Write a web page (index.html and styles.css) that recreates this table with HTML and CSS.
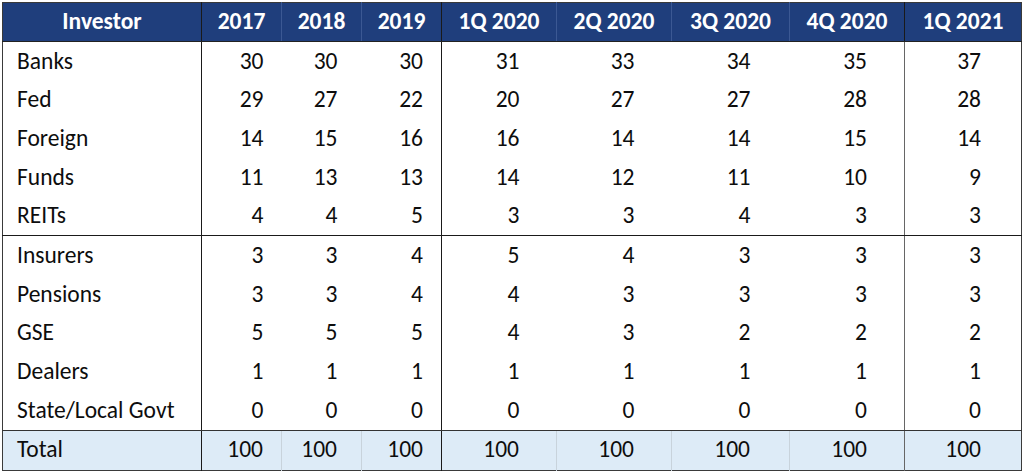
FILE: index.html
```html
<!DOCTYPE html>
<html>
<head>
<meta charset="utf-8">
<link rel="stylesheet" href="styles.css">
</head>
<body>
<table class="grid">
  <colgroup>
    <col class="c-name"><col class="c-yr"><col class="c-yr"><col class="c-yr">
    <col class="c-q"><col class="c-q"><col class="c-q3"><col class="c-q"><col class="c-q5">
  </colgroup>
  <thead>
    <tr>
      <th class="sep">Investor</th><th>2017</th><th>2018</th><th class="sep">2019</th>
      <th>1Q 2020</th><th>2Q 2020</th><th>3Q 2020</th><th class="sep">4Q 2020</th><th>1Q 2021</th>
    </tr>
  </thead>
  <tbody>
    <tr><td class="sep">Banks</td><td>30</td><td>30</td><td class="sep">30</td><td class="q">31</td><td class="q">33</td><td class="q">34</td><td class="q sep2">35</td><td class="q">37</td></tr>
    <tr><td class="sep">Fed</td><td>29</td><td>27</td><td class="sep">22</td><td class="q">20</td><td class="q">27</td><td class="q">27</td><td class="q sep2">28</td><td class="q">28</td></tr>
    <tr><td class="sep">Foreign</td><td>14</td><td>15</td><td class="sep">16</td><td class="q">16</td><td class="q">14</td><td class="q">14</td><td class="q sep2">15</td><td class="q">14</td></tr>
    <tr><td class="sep">Funds</td><td>11</td><td>13</td><td class="sep">13</td><td class="q">14</td><td class="q">12</td><td class="q">11</td><td class="q sep2">10</td><td class="q">9</td></tr>
    <tr class="grp"><td class="sep">REITs</td><td>4</td><td>4</td><td class="sep">5</td><td class="q">3</td><td class="q">3</td><td class="q">4</td><td class="q sep2">3</td><td class="q">3</td></tr>
    <tr><td class="sep">Insurers</td><td>3</td><td>3</td><td class="sep">4</td><td class="q">5</td><td class="q">4</td><td class="q">3</td><td class="q sep2">3</td><td class="q">3</td></tr>
    <tr><td class="sep">Pensions</td><td>3</td><td>3</td><td class="sep">4</td><td class="q">4</td><td class="q">3</td><td class="q">3</td><td class="q sep2">3</td><td class="q">3</td></tr>
    <tr><td class="sep">GSE</td><td>5</td><td>5</td><td class="sep">5</td><td class="q">4</td><td class="q">3</td><td class="q">2</td><td class="q sep2">2</td><td class="q">2</td></tr>
    <tr><td class="sep">Dealers</td><td>1</td><td>1</td><td class="sep">1</td><td class="q">1</td><td class="q">1</td><td class="q">1</td><td class="q sep2">1</td><td class="q">1</td></tr>
    <tr class="grp2"><td class="sep">State/Local Govt</td><td>0</td><td>0</td><td class="sep">0</td><td class="q">0</td><td class="q">0</td><td class="q">0</td><td class="q sep2">0</td><td class="q">0</td></tr>
    <tr class="total"><td class="sep">Total</td><td>100</td><td>100</td><td class="sep">100</td><td class="q">100</td><td class="q">100</td><td class="q">100</td><td class="q sep2">100</td><td class="q">100</td></tr>
  </tbody>
</table>
</body>
</html>
```
FILE: styles.css
```css
html, body {
  margin: 0;
  padding: 0;
  background: #ffffff;
}
body {
  padding: 2px 0 0 2px;
  font-family: Carlito, Calibri, Lato, "Liberation Sans", sans-serif;
  font-size: 23.5px;
  color: #0d0d0d;
}
.grid {
  border-collapse: collapse;
  table-layout: fixed;
  width: 1018px;
  border: 1.5px solid #3a3a3a;
}
.c-name { width: 199px; }
.c-yr { width: 80px; }
.c-q { width: 115px; }
.c-q3 { width: 118px; }
.c-q5 { width: 117px; }

thead th {
  background: #1f3e7c;
  color: #ffffff;
  font-weight: 700;
  height: 38px;
  padding: 0;
  text-align: center;
  line-height: 1;
  border-left: 1px solid #3b5893;
  border-bottom: 1.5px solid #222;
}
thead th:first-child { border-left: none; }
thead th.sep { border-right: 1.5px solid #1a1a1a; }

tbody td {
  height: 38.7px;
  padding: 0 18px 0 0;
  text-align: right;
  line-height: 1;
}
tbody td:first-child {
  text-align: left;
  padding: 0 0 0 14px;
}
tbody td.q { padding-right: 37px; }
tbody td:nth-child(7) { padding-right: 39px; }
tbody td:nth-child(9) { padding-right: 40px; }
tbody td.sep { border-right: 1.5px solid #1a1a1a; }
tbody td.sep2 { border-right: 1.5px solid #666; }
tbody td:nth-child(3) { padding-right: 24px; }

tr.grp td { border-bottom: 1.5px solid #1a1a1a; }
tr.grp2 td { border-bottom: 1.5px solid #333; }

tr.total td {
  background: #ddebf7;
  border-left: 1px solid #c8d3dc;
}
tr.total td:first-child { border-left: none; }
tr.total td.sep { border-right: 1.5px solid #1a1a1a; }
tr.total td.sep2 { border-right: 1.5px solid #666; }
```
